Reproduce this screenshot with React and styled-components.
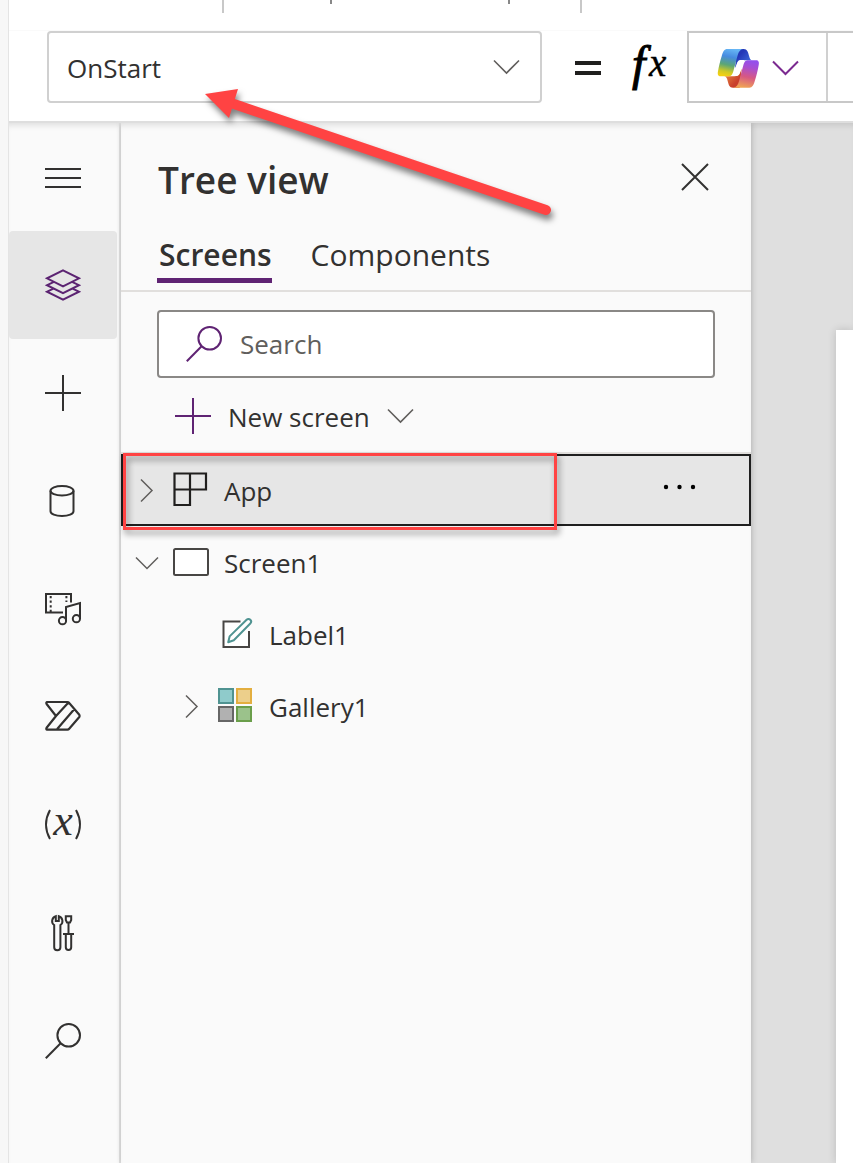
import React from "react";
import styled, { createGlobalStyle } from "styled-components";

const GlobalStyle = createGlobalStyle`
  *, *::before, *::after { box-sizing: border-box; }
  body {
    margin: 0;
    background: #fff;
    color: #323130;
    font-family: "Open Sans", "Noto Sans", sans-serif;
    font-size: 26px;
    line-height: 36px;
  }
  button, input, select { font: inherit; color: inherit; }
  button {
    border: 0;
    padding: 0;
    background: none;
    cursor: pointer;
  }
  svg { display: block; flex: none; }
`;

const Shell = styled.div`
  position: relative;
  display: flex;
  min-height: 100vh;
  overflow: hidden;
`;

const Gutter = styled.div`
  flex: none;
  width: 9px;
  background: #f7f7f7;
  border-right: 1px solid #e4e4e4;
`;

const Studio = styled.div`
  flex: 1;
  min-width: 0;
  display: flex;
  flex-direction: column;
`;

const CommandBar = styled.div`
  display: grid;
  grid-template-columns: 215px 108px 178px 72px;
  height: 31px;
  border-bottom: 1px solid #fafafa;
`;

const Divider = styled.span`
  justify-self: end;
  width: 2px;
  height: ${(p) => (p.$short ? 4 : 13)}px;
  background: ${(p) => (p.$short ? "#888" : "#c8c8c8")};
`;

const FormulaBar = styled.div`
  position: relative;
  z-index: 1;
  display: flex;
  align-items: center;
  height: 92px;
  padding: 0 0 18px 38px;
  background: #fff;
  border-bottom: 2px solid #dedede;
`;

const PropertyField = styled.label`
  position: relative;
  flex: none;
  width: 495px;
  svg {
    position: absolute;
    right: 21px;
    top: 28px;
    pointer-events: none;
  }
`;

const PropertySelect = styled.select`
  appearance: none;
  display: block;
  width: 100%;
  height: 72px;
  padding: 2px 48px 0 18px;
  background: #fff;
  border: 2px solid #d0d0d0;
  border-radius: 4px;
`;

const FormulaSigns = styled.div`
  flex: none;
  display: flex;
  align-items: center;
  gap: 24px;
  padding: 2px 18px 0 33px;
`;

const FormulaBox = styled.div`
  flex: 1;
  min-width: 0;
  display: flex;
  height: 72px;
  border: 2px solid #c8c8c8;
  border-right: 0;
`;

const CopilotButton = styled.button`
  flex: none;
  display: flex;
  align-items: center;
  gap: 12px;
  width: 139px;
  padding: 2px 0 0 28px;
  border-right: 2px solid #d0d0d0;
`;

const FormulaInput = styled.input`
  flex: 1;
  width: 0;
  min-width: 0;
  padding: 0;
  border: 0;
  outline: 0;
`;

const Workspace = styled.div`
  flex: 1;
  display: flex;
`;

const Rail = styled.nav`
  flex: none;
  display: flex;
  flex-direction: column;
  width: 112px;
  background: #fafafa;
  border-right: 2px solid #dedede;
  box-shadow: inset 0 6px 6px -4px rgba(0, 0, 0, 0.12);
`;

const RailButton = styled.button`
  display: grid;
  place-items: center;
  width: 108px;
  height: 108px;
  border-radius: 4px;
  color: ${(p) => (p.$active ? "#5c2472" : "#323130")};
  background: ${(p) => (p.$active ? "#e6e6e6" : "transparent")};
`;

const Panel = styled.aside`
  position: relative;
  z-index: 0;
  flex: none;
  width: 630px;
  background: #fafafa;
  box-shadow: 1px 0 6px rgba(0, 0, 0, 0.18), inset 0 6px 6px -4px rgba(0, 0, 0, 0.12);
`;

const PanelHeader = styled.header`
  display: flex;
  align-items: center;
  justify-content: space-between;
  height: 108px;
  padding: 6px 42px 0 37px;
`;

const Title = styled.h1`
  margin: 0;
  font-size: 37px;
  line-height: 52px;
  font-weight: 600;
`;

const CloseButton = styled.button`
  padding-bottom: 6px;
`;

const Tabs = styled.div`
  display: flex;
  gap: 37px;
  height: 61px;
  padding: 0 36px;
  border-bottom: 2px solid #e1dfdd;
`;

const Tab = styled.button`
  height: 52px;
  padding: 0 0 0 2px;
  font-size: 30px;
  line-height: 46px;
  font-weight: ${(p) => (p.$active ? 600 : 400)};
  border-bottom: 5px solid ${(p) => (p.$active ? "#5f2373" : "transparent")};
`;

const SearchField = styled.label`
  display: flex;
  align-items: center;
  gap: 18px;
  height: 68px;
  margin: 18px 36px 0;
  padding: 0 27px;
  color: #5f2373;
  background: #fff;
  border: 2px solid #8a8886;
  border-radius: 4px;
`;

const SearchInput = styled.input`
  flex: 1;
  min-width: 0;
  padding: 0;
  border: 0;
  outline: 0;
  color: #323130;
  &::placeholder { color: #605e5c; opacity: 1; }
`;

const NewScreen = styled.button`
  display: flex;
  align-items: center;
  gap: 17px;
  height: 74px;
  margin-left: 54px;
  padding-top: 2px;
  color: #5f2373;
`;

const ItemName = styled.span`
  padding-top: 2px;
  color: #323130;
`;

const Tree = styled.ul`
  margin: 0;
  padding: 0;
  list-style: none;
  border-top: 2px solid #e1dfdd;
`;

const Row = styled.li`
  position: relative;
  display: flex;
  align-items: center;
  height: 72px;
  padding: 0 51px 0 ${(p) => 12 + p.$level * 45}px;
  border: 2px solid ${(p) => (p.$selected ? "#1f1f1f" : "transparent")};
  background: ${(p) => (p.$selected ? "#e6e6e6" : "transparent")};
`;

const Toggle = styled.button`
  flex: none;
  display: grid;
  place-items: center;
  width: 24px;
  height: 36px;
  margin-right: 14px;
`;

const ToggleSpace = styled.span`
  flex: none;
  width: 38px;
`;

const Item = styled.button`
  flex: 1;
  display: flex;
  align-items: center;
  gap: 15px;
  text-align: left;
`;

const Highlight = styled.span`
  position: absolute;
  left: 0;
  top: -3px;
  width: 434px;
  height: 77px;
  border: 3px solid #ff4343;
  filter: drop-shadow(2px 4px 3px rgba(0, 0, 0, 0.45));
  pointer-events: none;
`;

const Canvas = styled.main`
  flex: 1;
  min-width: 0;
  display: flex;
  padding: 207px 0 0 85px;
  background: #dfdfdf;
  box-shadow: inset 0 6px 6px -4px rgba(0, 0, 0, 0.12);
`;

const Artboard = styled.div`
  flex: 1;
  background: #fff;
  box-shadow: 0 0 8px rgba(0, 0, 0, 0.16);
`;

const Pointer = styled.svg`
  position: absolute;
  z-index: 2;
  left: 195px;
  top: 80px;
  pointer-events: none;
  filter: drop-shadow(2px 5px 3px rgba(0, 0, 0, 0.5));
`;

function Icon({ w = 36, h = 36, stroke = 2, children }) {
  return (
    <svg
      width={w}
      height={h}
      viewBox={`0 0 ${w} ${h}`}
      overflow="visible"
      fill="none"
      stroke="currentColor"
      strokeWidth={stroke}
      aria-hidden="true"
    >
      {children}
    </svg>
  );
}

const ChevronDown = ({ color = "#605e5c", stroke = 1.6 }) => (
  <Icon w={28} h={16} stroke={stroke}>
    <path d="M1 1.5 13.5 14 26 1.5" stroke={color} />
  </Icon>
);

const ChevronSmallDown = () => (
  <Icon w={24} h={14} stroke={1.5}>
    <path d="M1 2.5 12 13.5 23 2.5" stroke="#605e5c" />
  </Icon>
);

const ChevronSmallRight = () => (
  <Icon w={14} h={24} stroke={1.5}>
    <path d="M1 1.5 12 12.5 1 23.5" stroke="#605e5c" />
  </Icon>
);

const MenuIcon = () => (
  <Icon>
    <path d="M0 10h36M0 19h36M0 28h36" />
  </Icon>
);

const LayersIcon = () => (
  <Icon>
    <path d="M18 3.3 34 11.3 18 19.3 2 11.3ZM9 14.8 2 18.2 18 26.2 34 18.2 27 14.8M9 21.3 2 24.7 18 32.7 34 24.7 27 21.3" />
  </Icon>
);

const PlusIcon = () => (
  <Icon>
    <path d="M18 0v36M0 18h36" />
  </Icon>
);

const DataIcon = () => (
  <Icon>
    <ellipse cx="17" cy="7.8" rx="11.5" ry="4.8" />
    <path d="M5.5 7.8v20.4c0 2.8 5 4.8 11.5 4.8s11.5-2 11.5-4.8V7.8" />
  </Icon>
);

const MediaIcon = () => (
  <Icon>
    <path d="M26 11.5V3H1v18.5h17M21 30V16l14-4V28" />
    <path d="M5.7 5v16" strokeDasharray="2.2 2.4" />
    <path d="M21.4 5v6" strokeDasharray="2.2 2.4" />
    <circle cx="17.5" cy="29.7" r="3.6" />
    <circle cx="31.4" cy="27.7" r="3.6" />
  </Icon>
);

const FlowIcon = () => (
  <Icon stroke={2.2}>
    <path
      d="M2 3H22.5Q23.5 3 24.2 4L34.3 15.7Q35 17 34.3 18L24.2 29.7Q23.5 30.6 22.5 30.6H2Q.8 30.2 1.6 28.8L11 17 1.6 5Q.8 3.6 2 3ZM23.5 3.5 11 17M29 10.5 12.2 30"
      strokeLinejoin="round"
    />
  </Icon>
);

const VariableIcon = () => (
  <Icon w={38}>
    <path d="M6 3Q-2 17.5 6 32M32 3Q40 17.5 32 32" />
    <text
      x="19"
      y="28"
      textAnchor="middle"
      fill="currentColor"
      stroke="none"
      fontFamily="Liberation Serif, serif"
      fontStyle="italic"
      fontSize="44"
    >
      x
    </text>
  </Icon>
);

const ToolsIcon = () => (
  <Icon>
    <path d="M10.8 1.2C6.5 2.5 6 8.2 9.2 10V32.2a3.1 3.1 0 0 0 6.2 0V10C18.6 8.2 18 2.5 13.8 1.2V6H10.8Z" />
    <path d="M20.8 1.2h5.4V5L25 7.6h-3L20.8 5ZM23.5 7.6V19M18 19h11M20.8 19v13.2a2.7 2.7 0 0 0 5.4 0V19" />
  </Icon>
);

const SearchIcon = () => (
  <Icon>
    <circle cx="23.7" cy="12.3" r="11.3" />
    <path d="M15.6 20.3.8 35.2" />
  </Icon>
);

const CloseIcon = () => (
  <Icon w={28} h={28}>
    <path d="M1 1 27 27M27 1 1 27" />
  </Icon>
);

const EqualsIcon = () => (
  <Icon w={26} h={18} stroke={4}>
    <path d="M0 4h26M0 14h26" stroke="#201f1e" />
  </Icon>
);

const FxIcon = () => (
  <svg
    width="44"
    height="52"
    viewBox="0 0 44 52"
    overflow="visible"
    fill="#000"
    fontFamily="Liberation Serif, serif"
    fontStyle="italic"
    role="img"
    aria-label="Formula"
  >
    <text x="7" y="38" fontSize="48" stroke="#000" strokeWidth="1">f</text>
    <text x="24" y="34" fontSize="39" stroke="#000" strokeWidth=".4">x</text>
  </svg>
);

const CopilotLogo = () => (
  <svg width="43" height="41" viewBox="0 0 129 123" aria-hidden="true">
    <defs>
      <linearGradient id="cool" x1=".6" y1="0" x2=".4" y2="1">
        <stop offset="0" stopColor="#66b6f5" />
        <stop offset=".3" stopColor="#468be0" />
        <stop offset=".6" stopColor="#5ba676" />
        <stop offset=".85" stopColor="#d0c924" />
        <stop offset="1" stopColor="#f3d012" />
      </linearGradient>
      <linearGradient id="blue" x1="0" y1="0" x2="1" y2="1">
        <stop offset=".3" stopColor="#2438b8" />
        <stop offset="1" stopColor="#4a80ea" />
      </linearGradient>
      <linearGradient id="warm" x1=".6" y1="0" x2=".4" y2="1">
        <stop offset="0" stopColor="#9350ed" />
        <stop offset=".25" stopColor="#a94fd2" />
        <stop offset=".6" stopColor="#d75883" />
        <stop offset="1" stopColor="#f0a454" />
      </linearGradient>
      <linearGradient id="red" x1="0" y1="0" x2="1" y2="1">
        <stop offset="0" stopColor="#f09a45" />
        <stop offset=".7" stopColor="#c93f2c" />
      </linearGradient>
    </defs>
    <path
      d="M60 3H80C91 3 93 12 96 23C98 31 100 36 106 37H76C67 37 62 42 59 50L54 60Z"
      fill="url(#blue)"
    />
    <path
      d="M68 119H48C37 119 35 110 32 99C30 91 28 86 22 85H52C61 85 66 80 69 72L74 62Z"
      fill="url(#red)"
    />
    <path
      d="M31 3H78C70 4 65 11 62 22L49 70C46 81 42 85 34 85H11C3 85 1 79 3 70C6 54 9 40 14 25C18 10 22 3 31 3Z"
      fill="url(#cool)"
    />
    <path
      d="M97 119H50C58 118 63 111 66 100L79 52C82 41 86 37 94 37H117C125 37 127 43 125 52C122 68 119 82 114 97C110 112 106 119 97 119Z"
      fill="url(#warm)"
    />
    <path
      d="M70 36H82C79 41 77 46 76 52L70 72C68 80 64 84 58 84H46C50 80 52 75 54 68L59 49C61 41 64 36 70 36Z"
      fill="#fff"
    />
  </svg>
);

const AppIcon = () => (
  <Icon>
    <path d="M1.5 1.5h31.5v16h-16v15.5H1.5ZM17 1.5v16H1.5" stroke="#201f1e" strokeWidth="2.2" />
  </Icon>
);

const ScreenIcon = () => (
  <Icon h={28}>
    <rect x="1" y="1" width="34" height="26" rx="1.5" fill="#fff" stroke="#484644" />
  </Icon>
);

const LabelIcon = () => (
  <Icon>
    <path d="M5.5 5.5h25v25h-25Z" fill="#fff" stroke="none" />
    <path d="M22.5 5.5h-17v25.5h25.5v-16" stroke="#484644" />
    <path
      d="M10.2 26.2 11.6 20.4 28.6 3.8a2.6 2.6 0 0 1 3.7 3.7L15.8 24.3Z"
      fill="#fff"
      stroke="#4f9391"
      strokeLinejoin="round"
    />
  </Icon>
);

const GalleryIcon = () => (
  <Icon>
    <rect x="1" y="1" width="14" height="14" fill="#8fcbcb" stroke="#4f9391" />
    <rect x="19" y="1" width="14" height="14" fill="#eccf8b" stroke="#e3ae3f" />
    <rect x="1" y="19" width="14" height="14" fill="#b1b1b1" stroke="#666" />
    <rect x="19" y="19" width="14" height="14" fill="#9bc28b" stroke="#6a9e4a" />
  </Icon>
);

const MoreIcon = () => (
  <svg width="36" height="12" viewBox="0 0 36 12" aria-hidden="true">
    <circle cx="4" cy="3" r="2.2" />
    <circle cx="17.5" cy="3" r="2.2" />
    <circle cx="31" cy="3" r="2.2" />
  </svg>
);

const railItems = [
  ["Menu", MenuIcon],
  ["Tree view", LayersIcon],
  ["Insert", PlusIcon],
  ["Data", DataIcon],
  ["Media", MediaIcon],
  ["Power Automate", FlowIcon],
  ["Variables", VariableIcon],
  ["Advanced tools", ToolsIcon],
  ["Search", SearchIcon],
];

const treeItems = [
  { name: "App", level: 0, Glyph: AppIcon, toggle: "closed", selected: true },
  { name: "Screen1", level: 0, Glyph: ScreenIcon, toggle: "open" },
  { name: "Label1", level: 1, Glyph: LabelIcon },
  { name: "Gallery1", level: 1, Glyph: GalleryIcon, toggle: "closed" },
];

function TreeRow({ name, level, Glyph, toggle, selected }) {
  return (
    <Row $level={level} $selected={selected}>
      {toggle ? (
        <Toggle aria-label={`Toggle ${name}`} aria-expanded={toggle === "open"}>
          {toggle === "open" ? <ChevronSmallDown /> : <ChevronSmallRight />}
        </Toggle>
      ) : (
        <ToggleSpace />
      )}
      <Item>
        <Glyph />
        <ItemName>{name}</ItemName>
      </Item>
      {selected && (
        <button aria-label="More actions">
          <MoreIcon />
        </button>
      )}
      {selected && <Highlight />}
    </Row>
  );
}

export default function App() {
  return (
    <Shell>
      <GlobalStyle />
      <Gutter />
      <Studio>
        <CommandBar>
          <Divider />
          <Divider $short />
          <Divider $short />
          <Divider />
        </CommandBar>
        <FormulaBar>
          <PropertyField>
            <PropertySelect aria-label="Property" defaultValue="OnStart">
              <option>OnStart</option>
            </PropertySelect>
            <ChevronDown />
          </PropertyField>
          <FormulaSigns>
            <EqualsIcon />
            <FxIcon />
          </FormulaSigns>
          <FormulaBox>
            <CopilotButton aria-label="Copilot">
              <CopilotLogo />
              <ChevronDown color="#7b2a90" stroke={2} />
            </CopilotButton>
            <FormulaInput aria-label="Formula" />
          </FormulaBox>
        </FormulaBar>
        <Workspace>
          <Rail>
            {railItems.map(([label, Glyph]) => (
              <RailButton key={label} aria-label={label} $active={label === "Tree view"}>
                <Glyph />
              </RailButton>
            ))}
          </Rail>
          <Panel>
            <PanelHeader>
              <Title>Tree view</Title>
              <CloseButton aria-label="Close">
                <CloseIcon />
              </CloseButton>
            </PanelHeader>
            <Tabs role="tablist">
              <Tab role="tab" aria-selected="true" $active>
                Screens
              </Tab>
              <Tab role="tab" aria-selected="false">
                Components
              </Tab>
            </Tabs>
            <SearchField>
              <SearchIcon />
              <SearchInput type="text" placeholder="Search" aria-label="Search" />
            </SearchField>
            <NewScreen>
              <PlusIcon />
              <ItemName>New screen</ItemName>
              <ChevronDown />
            </NewScreen>
            <Tree>
              {treeItems.map((item) => (
                <TreeRow key={item.name} {...item} />
              ))}
            </Tree>
          </Panel>
          <Canvas>
            <Artboard />
          </Canvas>
        </Workspace>
      </Studio>
      <Pointer width="370" height="150" viewBox="0 0 370 150" aria-hidden="true">
        <path d="M36 23 351 130" stroke="#ff4343" strokeWidth="10" strokeLinecap="round" />
        <path d="M10 14 43 9 34 38Z" fill="#ff4343" />
      </Pointer>
    </Shell>
  );
}
